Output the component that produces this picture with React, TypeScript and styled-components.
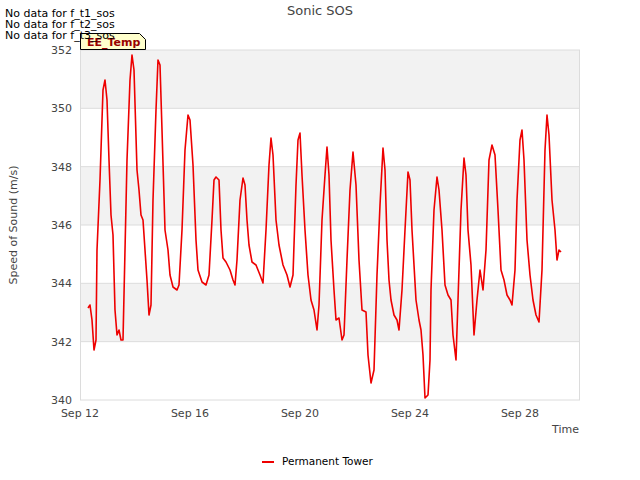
import React from "react";
import styled, { createGlobalStyle } from "styled-components";

const Global = createGlobalStyle`
  html, body { margin: 0; padding: 0; background: #fff; }
  body { font-family: "DejaVu Sans", sans-serif; }
`;

const Page = styled.div`
  position: relative;
  width: 640px;
  height: 480px;
  overflow: hidden;
`;

const Notes = styled.div`
  position: absolute;
  left: 5px;
  top: 8px;
  font-size: 11px;
  line-height: 11px;
  color: #000;
  z-index: 2;
`;

const Chart = styled.svg`
  display: block;
  font-family: "DejaVu Sans", sans-serif;
`;

const pts = `88,308 90,305 92,320 94,350 96,340 97,250 100,180 103,90 105,80 107,100 109,160 111,215 113,235 115,310 117,335 119,330 121,340 123,340 125,250 127,160 130,80 132,55 134,70 137,170 139,190 141,215 143,220 145,250 147,280 149,315 151,305 153,200 156,110 158,60 160,65 162,130 165,230 168,250 170,275 173,287 177,290 179,285 182,230 185,150 188,115 190,120 193,165 196,240 198,270 202,282 206,285 209,275 212,220 214,180 216,177 219,180 221,230 223,258 226,262 230,270 233,280 235,285 237,260 240,200 243,178 245,185 247,220 249,245 252,262 256,265 260,275 263,283 266,230 269,165 271,138 273,155 276,220 279,245 283,265 287,275 290,287 293,275 296,185 298,140 300,133 302,175 305,230 308,275 311,300 314,310 317,330 319,305 322,220 325,175 327,147 329,175 331,240 334,290 336,320 339,318 342,340 344,335 347,260 350,190 353,152 356,185 359,260 362,310 366,312 368,355 371,383 374,370 377,275 380,205 383,148 385,170 387,240 389,280 391,300 394,315 397,320 399,330 402,290 405,230 408,172 410,180 412,230 416,300 419,320 421,330 423,355 425,398 428,395 430,360 431,290 434,210 437,177 439,190 442,230 445,285 448,295 451,300 453,335 456,360 458,300 461,210 464,158 466,175 468,230 471,265 474,335 477,300 480,270 483,290 486,250 489,160 492,145 495,155 498,210 501,270 504,280 507,295 510,300 512,305 515,270 517,200 520,140 522,130 524,160 527,240 530,275 533,300 536,315 539,322 542,270 545,150 547,115 549,135 552,200 555,230 557,260 559,250 561,252`;

const yTicks = [340, 342, 344, 346, 348, 350, 352];
const yOf = (v: number) => 50 + (352 - v) * (350 / 12);
const xTicks = [
  { x: 80, t: "Sep 12" },
  { x: 190, t: "Sep 16" },
  { x: 300, t: "Sep 20" },
  { x: 410, t: "Sep 24" },
  { x: 520, t: "Sep 28" },
];

export default function App() {
  return (
    <Page>
      <Global />
      <Notes>
        <div>No data for f_t1_sos</div>
        <div>No data for f_t2_sos</div>
        <div>No data for f_t3_sos</div>
      </Notes>
      <Chart width={640} height={480}>
        <text x={320} y={15} textAnchor="middle" fontSize={13} fill="#444">Sonic SOS</text>
        {[350, 346, 342].map((v) => (
          <rect key={v} x={80} y={yOf(v + 2)} width={500} height={yOf(v) - yOf(v + 2)} fill="#f2f2f2" />
        ))}
        {yTicks.map((v) => (
          <g key={v}>
            <line x1={80} x2={580} y1={yOf(v)} y2={yOf(v)} stroke="#dcdcdc" strokeWidth={1} />
            <text x={72} y={yOf(v) + 4} textAnchor="end" fontSize={11} fill="#444">{v}</text>
          </g>
        ))}
        <line x1={80.5} x2={80.5} y1={50} y2={400} stroke="#dcdcdc" />
        <line x1={579.5} x2={579.5} y1={50} y2={400} stroke="#dcdcdc" />
        {xTicks.map((t) => (
          <text key={t.t} x={t.x} y={417} textAnchor="middle" fontSize={11} fill="#444">{t.t}</text>
        ))}
        <text x={579} y={433} textAnchor="end" fontSize={11} fill="#444">Time</text>
        <text transform="translate(17,225) rotate(-90)" textAnchor="middle" fontSize={11} fill="#444">Speed of Sound (m/s)</text>
        <polyline points={pts} fill="none" stroke="#ee0000" strokeWidth={1.6} strokeLinejoin="round" />
        <path d="M80.5,33.5 H139.5 L145.5,39.5 V49.5 H80.5 Z" fill="#ffffcc" stroke="#000" />
        <text x={87} y={46} fontSize={11} fontWeight="bold" fill="#990000">EE_Temp</text>
        <line x1={262} x2={274} y1={462} y2={462} stroke="#ee0000" strokeWidth={2} />
        <text x={282} y={465} fontSize={10.5} fill="#000">Permanent Tower</text>
      </Chart>
    </Page>
  );
}
